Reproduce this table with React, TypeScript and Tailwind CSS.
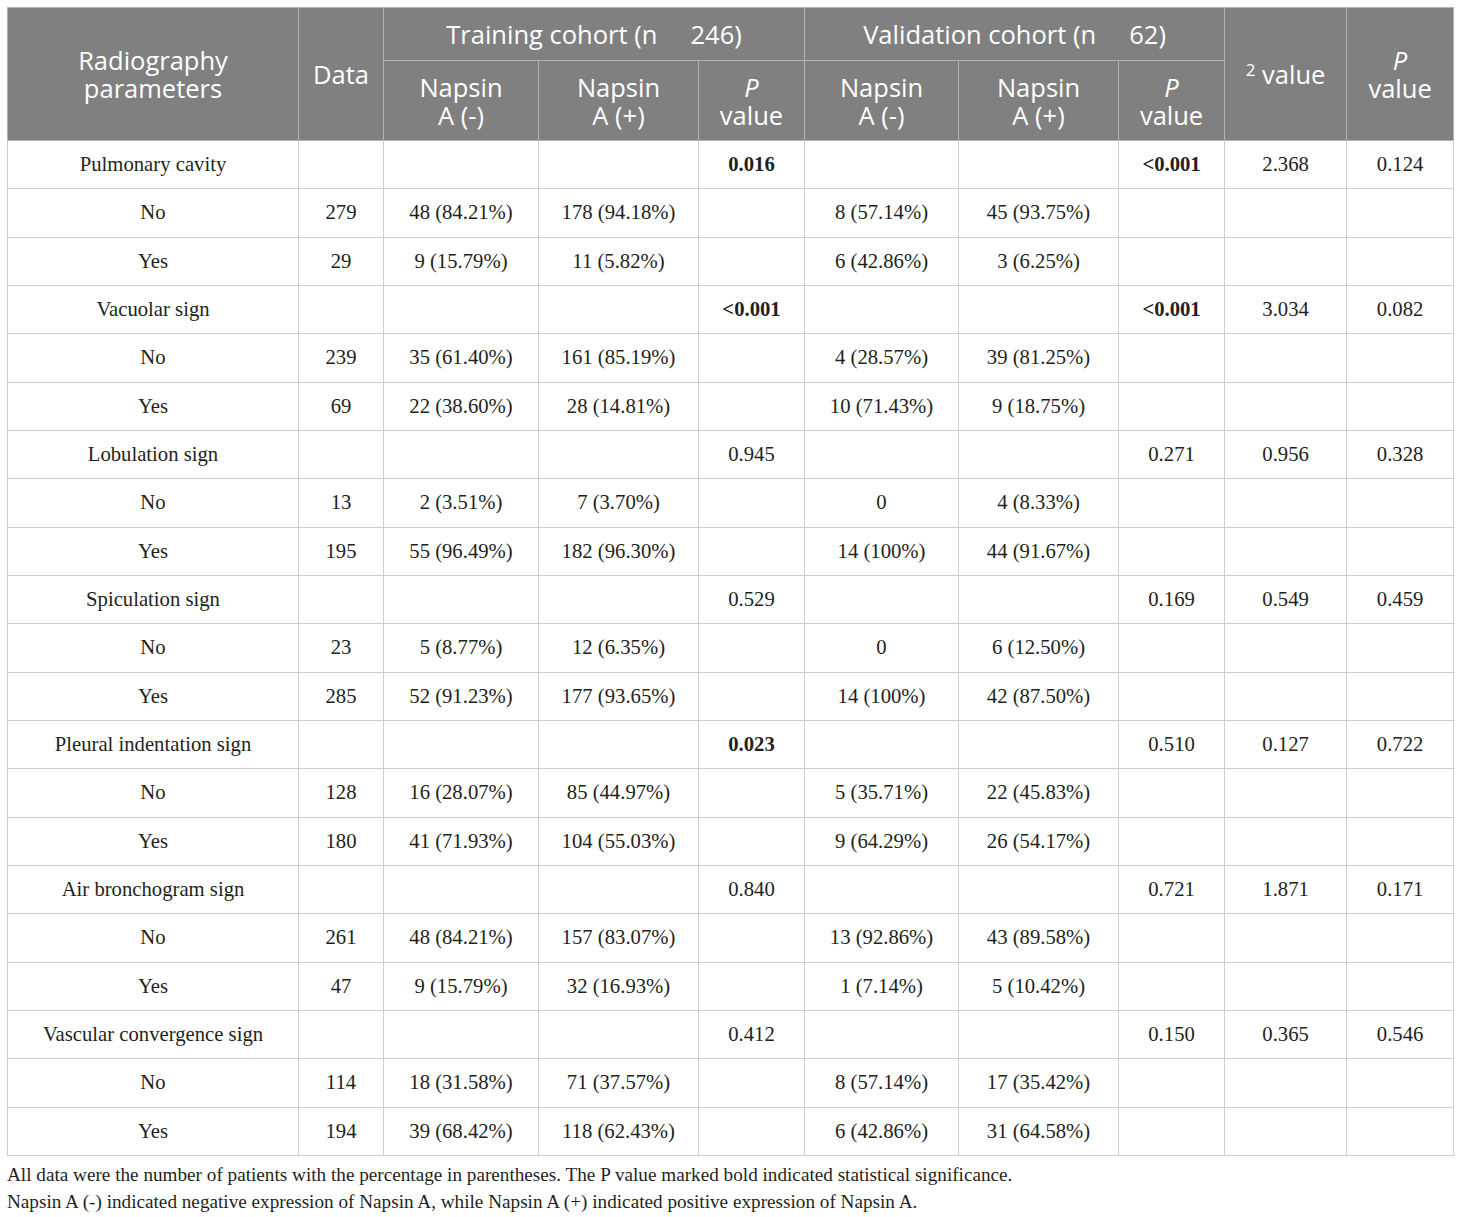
import React from "react";

type Row = { label: string; sub?: boolean; data?: string; a?: string; b?: string; p1?: string; p1b?: boolean; c?: string; d?: string; p2?: string; p2b?: boolean; chi?: string; p?: string };

const rows: Row[] = [
  { label: "Pulmonary cavity", p1: "0.016", p1b: true, p2: "<0.001", p2b: true, chi: "2.368", p: "0.124" },
  { label: "No", data: "279", a: "48 (84.21%)", b: "178 (94.18%)", c: "8 (57.14%)", d: "45 (93.75%)" },
  { label: "Yes", data: "29", a: "9 (15.79%)", b: "11 (5.82%)", c: "6 (42.86%)", d: "3 (6.25%)" },
  { label: "Vacuolar sign", p1: "<0.001", p1b: true, p2: "<0.001", p2b: true, chi: "3.034", p: "0.082" },
  { label: "No", data: "239", a: "35 (61.40%)", b: "161 (85.19%)", c: "4 (28.57%)", d: "39 (81.25%)" },
  { label: "Yes", data: "69", a: "22 (38.60%)", b: "28 (14.81%)", c: "10 (71.43%)", d: "9 (18.75%)" },
  { label: "Lobulation sign", p1: "0.945", p2: "0.271", chi: "0.956", p: "0.328" },
  { label: "No", data: "13", a: "2 (3.51%)", b: "7 (3.70%)", c: "0", d: "4 (8.33%)" },
  { label: "Yes", data: "195", a: "55 (96.49%)", b: "182 (96.30%)", c: "14 (100%)", d: "44 (91.67%)" },
  { label: "Spiculation sign", p1: "0.529", p2: "0.169", chi: "0.549", p: "0.459" },
  { label: "No", data: "23", a: "5 (8.77%)", b: "12 (6.35%)", c: "0", d: "6 (12.50%)" },
  { label: "Yes", data: "285", a: "52 (91.23%)", b: "177 (93.65%)", c: "14 (100%)", d: "42 (87.50%)" },
  { label: "Pleural indentation sign", p1: "0.023", p1b: true, p2: "0.510", chi: "0.127", p: "0.722" },
  { label: "No", data: "128", a: "16 (28.07%)", b: "85 (44.97%)", c: "5 (35.71%)", d: "22 (45.83%)" },
  { label: "Yes", data: "180", a: "41 (71.93%)", b: "104 (55.03%)", c: "9 (64.29%)", d: "26 (54.17%)" },
  { label: "Air bronchogram sign", p1: "0.840", p2: "0.721", chi: "1.871", p: "0.171" },
  { label: "No", data: "261", a: "48 (84.21%)", b: "157 (83.07%)", c: "13 (92.86%)", d: "43 (89.58%)" },
  { label: "Yes", data: "47", a: "9 (15.79%)", b: "32 (16.93%)", c: "1 (7.14%)", d: "5 (10.42%)" },
  { label: "Vascular convergence sign", p1: "0.412", p2: "0.150", chi: "0.365", p: "0.546" },
  { label: "No", data: "114", a: "18 (31.58%)", b: "71 (37.57%)", c: "8 (57.14%)", d: "17 (35.42%)" },
  { label: "Yes", data: "194", a: "39 (68.42%)", b: "118 (62.43%)", c: "6 (42.86%)", d: "31 (64.58%)" },
];

const th = "border border-[#b4b4b4] bg-[#808080] text-white font-normal text-center align-middle p-0";
const td = "border border-[#cdcdcd] text-center align-middle p-0";

export default function App() {
  return (
    <div className="bg-white w-[1460px] h-[1217px] pt-[7px] pl-[7px]">
      <table
        className="border-collapse table-fixed w-[1446px] text-[#231f20]"
        style={{ fontFamily: '"Liberation Serif", serif' }}
      >
        <colgroup>
          <col className="w-[291px]" />
          <col className="w-[85px]" />
          <col className="w-[155px]" />
          <col className="w-[160px]" />
          <col className="w-[106px]" />
          <col className="w-[154px]" />
          <col className="w-[160px]" />
          <col className="w-[106px]" />
          <col className="w-[122px]" />
          <col className="w-[107px]" />
        </colgroup>
        <thead className="text-[25.5px] leading-[28px]" style={{ fontFamily: '"Open Sans", sans-serif' }}>
          <tr className="h-[53px]">
            <th rowSpan={2} className={th}>Radiography<br />parameters</th>
            <th rowSpan={2} className={th}>Data</th>
            <th colSpan={3} className={th}>Training cohort (n&nbsp;&nbsp;&nbsp;&nbsp;&nbsp;246)</th>
            <th colSpan={3} className={th}>Validation cohort (n&nbsp;&nbsp;&nbsp;&nbsp;&nbsp;62)</th>
            <th rowSpan={2} className={th}><sup className="text-[17px]">2</sup> value</th>
            <th rowSpan={2} className={th}><i>P</i><br />value</th>
          </tr>
          <tr className="h-[80px]">
            <th className={th}>Napsin<br />A (-)</th>
            <th className={th}>Napsin<br />A (+)</th>
            <th className={th}><i>P</i><br />value</th>
            <th className={th}>Napsin<br />A (-)</th>
            <th className={th}>Napsin<br />A (+)</th>
            <th className={th}><i>P</i><br />value</th>
          </tr>
        </thead>
        <tbody className="text-[20.7px]">
          {rows.map((r, i) => (
            <tr key={i} className="h-[48.33px]">
              <td className={td}>{r.label}</td>
              <td className={td}>{r.data ?? ""}</td>
              <td className={td}>{r.a ?? ""}</td>
              <td className={td}>{r.b ?? ""}</td>
              <td className={td + (r.p1b ? " font-bold" : "")}>{r.p1 ?? ""}</td>
              <td className={td}>{r.c ?? ""}</td>
              <td className={td}>{r.d ?? ""}</td>
              <td className={td + (r.p2b ? " font-bold" : "")}>{r.p2 ?? ""}</td>
              <td className={td}>{r.chi ?? ""}</td>
              <td className={td}>{r.p ?? ""}</td>
            </tr>
          ))}
        </tbody>
      </table>
      <div className="text-[19.2px] leading-[27px] text-[#231f20] mt-[5px]" style={{ fontFamily: '"Liberation Serif", serif' }}>
        <p>All data were the number of patients with the percentage in parentheses. The P value marked bold indicated statistical significance.</p>
        <p>Napsin A (-) indicated negative expression of Napsin A, while Napsin A (+) indicated positive expression of Napsin A.</p>
      </div>
    </div>
  );
}
